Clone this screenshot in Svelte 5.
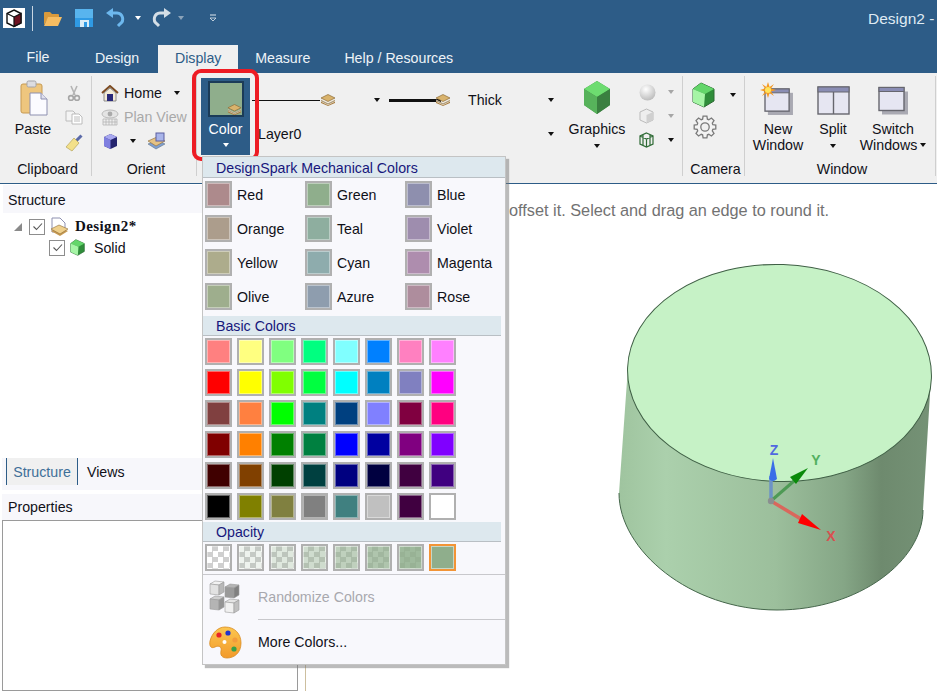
<script lang="ts">
  const tabs = ['Design', 'Display', 'Measure', 'Help / Resources'];

  const namedColors = [
    ['Red', '#ad8a8c'], ['Green', '#8fae8c'], ['Blue', '#8e8fae'],
    ['Orange', '#ac9d8c'], ['Teal', '#8eae9f'], ['Violet', '#9e8dae'],
    ['Yellow', '#adac8c'], ['Cyan', '#8eacad'], ['Magenta', '#ae8dae'],
    ['Olive', '#9eae8d'], ['Azure', '#8e9dae'], ['Rose', '#ae8d9d']
  ];

  const basicColors = [
    '#ff8080', '#ffff80', '#80ff80', '#00ff80', '#80ffff', '#0080ff', '#ff80c0', '#ff80ff',
    '#ff0000', '#ffff00', '#80ff00', '#00ff40', '#00ffff', '#0080c0', '#8080c0', '#ff00ff',
    '#804040', '#ff8040', '#00ff00', '#008080', '#004080', '#8080ff', '#800040', '#ff0080',
    '#800000', '#ff8000', '#008000', '#008040', '#0000ff', '#0000a0', '#800080', '#8000ff',
    '#400000', '#804000', '#004000', '#004040', '#000080', '#000040', '#400040', '#400080',
    '#000000', '#808000', '#808040', '#808080', '#408080', '#c0c0c0', '#400040', '#ffffff'
  ];

  const opacities = [0, 0.14, 0.28, 0.42, 0.57, 0.71, 0.85, 1];

  // the four little cubes of the Randomize Colors icon
  const randomCubes = [
    { x: 1, y: 1, top: '#f2f2f2', front: '#e2e2e2', side: '#b8b8b8' },
    { x: 16, y: 4, top: '#b4b4b4', front: '#9a9a9a', side: '#808080' },
    { x: 1, y: 16, top: '#cfcfcf', front: '#b4b4b4', side: '#949494' },
    { x: 16, y: 19, top: '#e4e4e4', front: '#f0f0f0', side: '#c0c0c0' }
  ];

  // eight toothed outline for the camera settings gear
  const gearPoints = (() => {
    const pts: string[] = [];
    for (let i = 0; i < 8; i++) {
      const a = (i * Math.PI) / 4;
      for (const [da, r] of [[-0.3, 8.2], [-0.17, 11], [0.17, 11], [0.3, 8.2]]) {
        pts.push(`${(12 + r * Math.cos(a + da)).toFixed(1)},${(12 + r * Math.sin(a + da)).toFixed(1)}`);
      }
    }
    return pts.join(' ');
  })();
</script>

{#snippet caret()}
  <span class="caret"></span>
{/snippet}

{#snippet layerIcon(w = 16)}
  <svg width={w} height={w * 0.75} viewBox="0 0 16 12">
    <path d="M1 7.500 8 11 15 7.500 15 9 8 12 1 9Z" fill="#a97f45" />
    <path d="M1 5.500 8 9 15 5.500 15 7.500 8 11 1 7.500Z" fill="#e9d6ac" />
    <path d="M1 4 8 .5 15 4 8 7.500Z" fill="#d9b36c" stroke="#8c6a35" stroke-width=".7" />
    <path d="M1 6.500 8 10 15 6.500" fill="none" stroke="#8d7d6c" stroke-width=".8" />
  </svg>
{/snippet}

{#snippet graphicsCube()}
  <svg width="28" height="35" viewBox="0 0 28 35">
    <path d="M14 1 27 9 27 25 14 34 1 25 1 9Z" fill="#3f8d44" />
    <path d="M14 1 27 9 14 17 1 9Z" fill="#6ddc70" />
    <path d="M1 9 14 17 14 34 1 25Z" fill="#57b25b" />
    <path d="M14 17 27 9 27 25 14 34Z" fill="#3a7f40" />
  </svg>
{/snippet}

{#snippet solidCube(w, h)}
  <svg width={w} height={h} viewBox="0 0 23 26">
    <path d="M9 1 22 7 22 19 12 25 1 20 1 7Z" fill="#2f8d3a" stroke="#2d6a34" />
    <path d="M1 7 9 1 22 7 13 12Z" fill="#63d66a" />
    <path d="M1 7 13 12 12 25 1 20Z" fill="#a6f5a6" />
  </svg>
{/snippet}

{#snippet windowIcon(w, h)}
  <svg width={w} height={h} viewBox="0 0 30 28">
    <rect x="4" y="5" width="26" height="23" fill="#a9a9b2" />
    <rect x="1" y="1" width="25" height="23" fill="#e6e6f2" stroke="#66666e" stroke-width="1.4" />
    <rect x="1" y="1" width="25" height="4" fill="#8a8db4" stroke="#66666e" stroke-width="1" />
  </svg>
{/snippet}

{#snippet checkMark()}
  <span class="check">
    <svg width="11" height="9" viewBox="0 0 11 9"><path d="M1.5 4.500 4.500 7.500 10 1.500" fill="none" stroke="#555" stroke-width="1.1" /></svg>
  </span>
{/snippet}

<div class="app">
  <header class="titlebar">
    <div class="qat">
      <span class="app-icon">
        <svg width="22" height="20" viewBox="0 0 22 20">
          <rect width="22" height="20" fill="#fff" />
          <path d="M11 2 18 5.500 18 15 11 18.500 4 15 4 5.500Z" fill="#fff" stroke="#111" stroke-width="1.4" />
          <path d="M11 9 18 5.500 18 15 11 18.500Z" fill="#6d1220" stroke="#111" stroke-width="1.2" />
          <path d="M4 5.500 11 9" stroke="#111" stroke-width="1.2" />
        </svg>
      </span>
      <span class="qat-sep"></span>
      <svg class="folder" width="20" height="17" viewBox="0 0 20 17">
        <path d="M1 15V3q0-1 1-1h5l2 2h6q1 0 1 1v2H6L1 15Z" fill="#d99a3c" />
        <path d="M1 16 5 7h14l-4 9Z" fill="#f6bd62" />
      </svg>
      <svg class="save" width="18" height="18" viewBox="0 0 18 18">
        <rect width="18" height="18" fill="#2f9ae4" />
        <rect x="0" y="0" width="18" height="9" fill="#58b4ee" />
        <rect x="5" y="11" width="9" height="7" fill="#d8ecf8" />
        <rect x="9" y="13" width="3" height="5" fill="#2f9ae4" />
      </svg>
      <svg class="undo" width="20" height="20" viewBox="0 0 20 20">
        <path d="M4 5H11a6 6 0 0 1 3 11l-2 2" fill="none" stroke="#6db8ee" stroke-width="3" />
        <path d="M7 0 7 10 0 5Z" fill="#6db8ee" />
      </svg>
      {@render caret()}
      <svg class="redo" width="22" height="20" viewBox="0 0 20 20">
        <path d="M16 5H9a6 6 0 0 0-3 11l2 2" fill="none" stroke="#d4dee6" stroke-width="3" />
        <path d="M13 0 13 10 20 5Z" fill="#d4dee6" />
      </svg>
      <span class="caret qat-dim"></span>
      <svg class="customize" width="8" height="8" viewBox="0 0 8 8">
        <path d="M1 1H7" stroke="#dfe7ee" stroke-width="1" />
        <path d="M1 4 4 7 7 4Z" fill="none" stroke="#dfe7ee" stroke-width=".8" />
      </svg>
      <span class="doc-title">Design2 -</span>
    </div>
    <nav class="tabs">
      <span class="tab file">File</span>
      {#each tabs as tab}
        <span class="tab" class:active={tab === 'Display'}>{tab}</span>
      {/each}
    </nav>
  </header>

  <div class="ribbon">
    <section class="group clipboard">
      <div class="group-body">
        <div class="big-btn paste">
          <svg width="28" height="36" viewBox="0 0 28 36">
            <rect x="1" y="4" width="21" height="29" rx="2" fill="#eec67e" stroke="#c79a52" />
            <rect x="7" y="1" width="9" height="6" rx="1.5" fill="#dcdce0" stroke="#a4a4a8" />
            <path d="M10 13H21L27 19V35H10Z" fill="#fbfbff" stroke="#8d90b0" />
            <path d="M21 13V19H27" fill="#dfe0ee" stroke="#8d90b0" />
          </svg>
          <span>Paste</span>
        </div>
        <div class="mini-col">
          <svg width="14" height="16" viewBox="0 0 14 16">
            <path d="M4 1 8 10M10 1 6 10" stroke="#b4b4b4" stroke-width="1.6" fill="none" />
            <circle cx="4" cy="13" r="2.400" fill="none" stroke="#a6a6a6" stroke-width="1.6" />
            <circle cx="10" cy="13" r="2.400" fill="none" stroke="#a6a6a6" stroke-width="1.6" />
          </svg>
          <svg width="18" height="15" viewBox="0 0 18 15">
            <path d="M1 1H8L10 3V11H1Z" fill="#f4f4f4" stroke="#bcbcbc" />
            <path d="M7 4H14L17 7V14H7ZM9 7H15M9 9H15M9 11H15" fill="#fff" stroke="#b4b4b4" stroke-width=".9" />
          </svg>
          <svg width="18" height="18" viewBox="0 0 18 18">
            <path d="M16.500 1.500 10 8" stroke="#5b6aa8" stroke-width="3" />
            <path d="M9 4 14 9 7 17 1 13Z" fill="#f3e08a" stroke="#b5a55a" stroke-width=".7" />
          </svg>
        </div>
      </div>
      <span class="group-label">Clipboard</span>
    </section>

    <section class="group orient">
      <div class="group-body rows">
        <div class="row">
          <svg width="18" height="17" viewBox="0 0 18 17">
            <path d="M1 8 9 1 17 8" fill="none" stroke="#7c4a20" stroke-width="2" />
            <path d="M3 8 9 3 15 8V16H3Z" fill="#f4ecd8" stroke="#777" stroke-width=".8" />
            <rect x="6" y="9" width="6" height="7" fill="#2a2a7a" />
          </svg>
          <span class="row-text">Home</span>
          <span class="row-caret home-caret">{@render caret()}</span>
        </div>
        <div class="row">
          <svg width="18" height="17" viewBox="0 0 18 17">
            <ellipse cx="9" cy="5" rx="8" ry="4" fill="#e4e4e4" stroke="#bbb" />
            <circle cx="9" cy="5" r="2.400" fill="#aaa" />
            <path d="M2 10H16V16H2ZM5 10V16M8 10V16M11 10V16M14 10V16M2 13H16" fill="#eee" stroke="#b4b4b4" stroke-width=".8" />
          </svg>
          <span class="row-text muted">Plan View</span>
        </div>
        <div class="row">
          <svg class="ori-cube" width="15" height="17" viewBox="0 0 15 17">
            <path d="M7.500 1 14 4 14 13 7.500 16 1 13 1 4Z" fill="#24246e" />
            <path d="M1 4 7.500 7 7.500 16 1 13Z" fill="#7f7fe0" />
            <path d="M1 4 7.500 1 14 4 7.500 7Z" fill="#a8a8f0" />
          </svg>
          <span class="ori-caret">{@render caret()}</span>
          <svg width="19" height="18" viewBox="0 0 19 18">
            <path d="M1 12 10 8 18 12 9 17Z" fill="#7f9fd0" stroke="#567" stroke-width=".5" />
            <path d="M1 9 10 5 18 9 9 14Z" fill="#e5c283" stroke="#8c6a35" stroke-width=".6" />
            <rect x="9" y="1" width="8" height="8" fill="#a8b4ea" stroke="#5b5ea0" />
          </svg>
        </div>
      </div>
      <span class="group-label">Orient</span>
    </section>

    <section class="group format">
      <div class="group-body format-body">
        <div class="color-btn">
          <span class="color-ring"></span>
          <span class="color-preview"><span class="layer-badge">{@render layerIcon(15)}</span></span>
          <span class="color-text">Color</span>
          <span class="caret white"></span>
        </div>
        <div class="style-rows">
          <div class="style-row top">
            <span class="line thin"></span>
            {@render layerIcon(16)}
            <span class="thin-caret">{@render caret()}</span>
            <span class="line thick"></span>
            <span class="thick-badge">{@render layerIcon(16)}</span>
            <span class="thick-label">Thick</span>
            <span class="end-caret">{@render caret()}</span>
          </div>
          <div class="style-row bottom">
            <span class="layer-name">Layer0</span>
            <span class="end-caret">{@render caret()}</span>
          </div>
        </div>
        <div class="big-btn graphics">
          {@render graphicsCube()}
          <span>Graphics</span>
          <span class="caret"></span>
        </div>
        <div class="shade-col">
          <div class="shade-row">
            <svg width="17" height="17" viewBox="0 0 17 17">
              <defs>
                <radialGradient id="sphere" cx="0.4" cy="0.3" r="0.8">
                  <stop offset="0" stop-color="#fff" /><stop offset="1" stop-color="#b4b4b4" />
                </radialGradient>
              </defs>
              <circle cx="8.500" cy="8.500" r="8" fill="url(#sphere)" />
            </svg>
            <span class="caret dim"></span>
          </div>
          <div class="shade-row">
            <svg width="15" height="16" viewBox="0 0 15 16">
              <path d="M7.500 1 14 4 14 12 7.500 15 1 12 1 4Z" fill="#eee" stroke="#bbb" />
              <path d="M7.500 7 14 4 14 12 7.500 15Z" fill="#d0d0d0" />
            </svg>
            <span class="caret dim"></span>
          </div>
          <div class="shade-row">
            <svg width="15" height="16" viewBox="0 0 15 16">
              <path d="M7.500 1 14 4 14 12 7.500 15 1 12 1 4ZM1 4 7.500 7 14 4M7.500 7V15M4 3V13M11 3V13" fill="none" stroke="#2f6b36" stroke-width="1.2" />
            </svg>
            <span class="caret"></span>
          </div>
        </div>
      </div>
    </section>

    <section class="group camera">
      <div class="group-body rows">
        <div class="row cam-row">
          {@render solidCube(23, 26)}
          {@render caret()}
        </div>
        <svg class="gear" width="24" height="24" viewBox="0 0 24 24">
          <polygon points={gearPoints} fill="#f3f3f3" stroke="#7a7a7a" stroke-width="1.3" />
          <circle cx="12" cy="12" r="4.200" fill="#f0f0f0" stroke="#7a7a7a" stroke-width="1.3" />
        </svg>
      </div>
      <span class="group-label">Camera</span>
    </section>

    <section class="group window">
      <div class="group-body win-body">
        <div class="big-btn win new">
          <span class="win-icon">
            {@render windowIcon(29, 27)}
            <svg class="spark" width="16" height="16" viewBox="0 0 16 16">
              <polygon points="8,0 9.6,5 14,2 11,6.4 16,8 11,9.6 14,14 9.6,11 8,16 6.4,11 2,14 5,9.6 0,8 5,6.4 2,2 6.4,5" fill="#f59a23" />
              <circle cx="8" cy="8" r="3" fill="#ffe45c" />
            </svg>
          </span>
          <span>New<br />Window</span>
        </div>
        <div class="big-btn win split">
          <span class="win-icon">
            <svg width="33" height="29" viewBox="0 0 33 29">
              <rect x="1" y="1" width="31" height="27" fill="#e6e6f2" stroke="#66666e" stroke-width="1.4" />
              <rect x="1" y="1" width="31" height="5" fill="#8a8db4" stroke="#66666e" />
              <path d="M16.500 6V28" stroke="#66666e" stroke-width="1.4" />
            </svg>
          </span>
          <span>Split</span>
          <span class="caret"></span>
        </div>
        <div class="big-btn win switch">
          <span class="win-icon">{@render windowIcon(30, 29)}</span>
          <span>Switch<br />Windows<span class="caret inline"></span></span>
        </div>
      </div>
      <span class="group-label">Window</span>
    </section>
  </div>

  <main class="workspace">
    <aside class="side">
      <div class="pane-head">Structure</div>
      <div class="tree">
        <div class="tree-row">
          <svg class="twisty" width="8" height="8" viewBox="0 0 8 8"><path d="M8 0V8H0Z" fill="#8a8a8a" /></svg>
          {@render checkMark()}
          <svg width="19" height="20" viewBox="0 0 19 20">
            <path d="M2 1H10L15 6V15H2Z" fill="#fff" stroke="#8d90b0" />
            <path d="M1 14 9 10 18 14 10 19Z" fill="#c79a52" />
            <path d="M1 12 9 8 18 12 10 17Z" fill="#efd08c" stroke="#8c6a35" stroke-width=".6" />
          </svg>
          <span class="design-name">Design2*</span>
        </div>
        <div class="tree-row solid">
          {@render checkMark()}
          {@render solidCube(15, 17)}
          <span class="solid-name">Solid</span>
        </div>
      </div>
      <div class="side-tabs">
        <span class="side-tab on">Structure</span>
        <span class="side-tab">Views</span>
      </div>
      <div class="pane-head props">Properties</div>
      <div class="props-box"></div>
    </aside>

    <div class="viewport">
      <p class="hint">offset it. Select and drag an edge to round it.</p>
      <svg class="model" width="632" height="507" viewBox="305 184 632 507">
        <defs>
          <linearGradient id="wall" x1="619" x2="931" y1="0" y2="0" gradientUnits="userSpaceOnUse">
            <stop offset="0" stop-color="#9fc49f" />
            <stop offset="0.15" stop-color="#abd0ac" />
            <stop offset="0.5" stop-color="#9cbf9c" />
            <stop offset="0.72" stop-color="#85a686" />
            <stop offset="0.84" stop-color="#6e8a6e" />
            <stop offset="1" stop-color="#759276" />
          </linearGradient>
        </defs>
        <path d="M628 367 619 493C619 550 690 610 777 610C860 610 923 560 923 510L931 377Z" fill="url(#wall)" />
        <path d="M619 493C619 550 690 610 777 610C860 610 923 560 923 510" fill="none" stroke="#45664b" />
        <ellipse cx="779.500" cy="373" rx="152" ry="108.500" transform="rotate(2 779.500 373)" fill="#c6f2c6" stroke="#3f5f45" />

        <path d="M771 501V476" stroke="#6d93c6" stroke-width="3.5" />
        <path d="M773 458 777 479 Q773 483 769 479Z" fill="#3a6ee8" />
        <path d="M771 501 794 481" stroke="#4e9a55" stroke-width="3" />
        <path d="M808 468 796 484 790 477Z" fill="#0a8a0a" />
        <path d="M771 501 801 519" stroke="#d9675c" stroke-width="3.5" />
        <path d="M821 530 798 523 802 514Z" fill="#f00" />
        <circle cx="771" cy="501" r="3.200" fill="#8a8f90" />
        <text x="774" y="455" class="axis" fill="#5068e0" text-anchor="middle">Z</text>
        <text x="816" y="465" class="axis" fill="#52b060" text-anchor="middle">Y</text>
        <text x="831" y="541" class="axis" fill="#d85050" text-anchor="middle">X</text>
      </svg>
    </div>
  </main>

  <div class="color-menu">
    <div class="menu-head first">DesignSpark Mechanical Colors</div>
    <div class="named-grid">
      {#each namedColors as [name, value]}
        <div class="named">
          <span class="swatch"><i style:background={value}></i></span>
          <span>{name}</span>
        </div>
      {/each}
    </div>
    <div class="menu-head">Basic Colors</div>
    <div class="basic-grid">
      {#each basicColors as value}
        <span class="swatch"><i style:background={value}></i></span>
      {/each}
    </div>
    <div class="menu-head opacity-head">Opacity</div>
    <div class="opacity-row">
      {#each opacities as alpha, i}
        <span class="swatch" class:selected={i === opacities.length - 1}>
          <i class="checker"><b style:opacity={alpha}></b></i>
        </span>
      {/each}
    </div>
    <div class="menu-item disabled">
      <svg width="33" height="34" viewBox="0 0 33 34">
        {#each randomCubes as c}
          <path d="M{c.x} {c.y + 3}l5-3 9 1-5 3Z" fill={c.top} stroke="#9a9a9a" stroke-width=".6" />
          <path d="M{c.x} {c.y + 3}l9 1v10l-9-1Z" fill={c.front} stroke="#9a9a9a" stroke-width=".6" />
          <path d="M{c.x + 9} {c.y + 4}l5-3v10l-5 3Z" fill={c.side} stroke="#9a9a9a" stroke-width=".6" />
        {/each}
      </svg>
      <span>Randomize Colors</span>
    </div>
    <div class="menu-rule"></div>
    <div class="menu-item">
      <svg width="33" height="33" viewBox="0 0 33 33">
        <defs>
          <linearGradient id="palette" x1="0" x2="0" y1="0" y2="1">
            <stop offset="0" stop-color="#fcc650" /><stop offset="1" stop-color="#f29a2a" />
          </linearGradient>
        </defs>
        <path d="M16 1C26 1 32 8 32 17 32 27 25 32 18 32 13 32 11 29 12 25 13 21 10 19 6 21 2 23 0 20 1 15 3 7 9 1 16 1Z" fill="url(#palette)" stroke="#d98a20" stroke-width=".8" />
        <circle cx="10" cy="9" r="2.600" fill="#e8242a" />
        <circle cx="19" cy="7" r="2.600" fill="#2233cc" />
        <circle cx="26" cy="14" r="2.600" fill="#f39c3c" />
        <circle cx="25" cy="23" r="2.600" fill="#38a048" />
        <circle cx="15.500" cy="16" r="2" fill="#fff" />
      </svg>
      <span>More Colors...</span>
    </div>
  </div>
</div>

<style>
  :global(body) {
    margin: 0;
    background: #fff;
  }

  .app {
    position: relative;
    display: flex;
    flex-direction: column;
    width: 937px;
    height: 691px;
    overflow: hidden;
    font-family: 'Liberation Sans', Arial, sans-serif;
    font-size: 14.2px;
    color: #101018;
  }

  /* title bar */
  .titlebar {
    height: 73px;
    background: #2d5c87;
    color: #fff;
    flex: none;
  }

  .qat {
    display: flex;
    align-items: center;
    height: 45px;
    padding: 0 0 9px 3px;
    box-sizing: border-box;
  }

  .app-icon {
    display: flex;
  }

  .qat-sep {
    width: 1px;
    height: 25px;
    margin: 0 10px 0 7px;
    background: #c9d6e2;
  }

  .save {
    margin-left: 12px;
  }

  .undo {
    margin: 0 9px 0 13px;
  }

  .qat .caret {
    border-top-color: #fff;
  }

  .redo {
    margin-left: 9px;
  }

  .qat .qat-dim {
    margin-left: 6px;
    border-top-color: #8ba3b9;
  }

  .customize {
    margin-left: 25px;
  }

  .doc-title {
    margin-left: auto;
    padding-top: 2px;
    width: 69px;
    font-size: 15.5px;
    color: #dfeaf3;
    white-space: nowrap;
  }

  .tabs {
    display: flex;
    height: 28px;
  }

  .tab {
    padding: 0 17px;
    line-height: 27px;
    color: #eef3f7;
    white-space: nowrap;
  }

  .tab.file {
    width: 76px;
    padding: 0;
    margin-right: 2px;
    text-align: center;
    line-height: 25px;
    box-sizing: border-box;
  }

  .tab.active {
    width: 80px;
    margin: 0 0 0 2px;
    padding: 0;
    text-align: center;
    background: #f0f0f0;
    color: #2d5c87;
  }

  /* ribbon */
  .ribbon {
    display: flex;
    height: 111px;
    flex: none;
    box-sizing: border-box;
    background: #f0f0f0;
    border-bottom: 1px solid #2d5c87;
  }

  .group {
    display: flex;
    flex-direction: column;
    flex: none;
    height: 100px;
    margin-top: 3px;
    box-sizing: border-box;
    border-right: 1px solid #cfcfcf;
  }

  .group-body {
    display: flex;
    flex: none;
    height: 86px;
  }

  .group-label {
    height: 14px;
    padding-left: 4px;
    text-align: center;
    line-height: 14px;
  }

  .clipboard {
    width: 92px;
  }

  .orient {
    width: 105px;
  }

  .format {
    width: 486px;
  }

  .camera {
    width: 62px;
  }

  .window {
    width: 191px;
  }

  .big-btn {
    display: flex;
    flex-direction: column;
    align-items: center;
    text-align: center;
    line-height: 16px;
  }

  .big-btn .caret {
    margin-top: 6px;
  }

  .paste {
    width: 66px;
    padding-top: 4px;
    gap: 5px;
  }

  .paste svg {
    margin-left: 1px;
  }

  .mini-col {
    display: flex;
    flex-direction: column;
    align-items: center;
    width: 20px;
    margin-left: -2px;
    padding-top: 9px;
    gap: 9px;
  }

  .rows {
    flex-direction: column;
    padding: 5px 0 0 9px;
    box-sizing: border-box;
  }

  .row {
    display: flex;
    align-items: center;
    flex: none;
    height: 24px;
  }

  .row-text {
    margin-left: 5px;
    white-space: nowrap;
  }

  .muted {
    color: #a9a9a9;
  }

  .home-caret {
    display: flex;
    margin-left: 12px;
  }

  .ori-cube {
    margin-left: 2px;
  }

  .ori-caret {
    display: flex;
    margin: 0 11px 0 12px;
  }

  .caret {
    display: inline-block;
    width: 0;
    height: 0;
    flex: none;
    border-left: 3.5px solid transparent;
    border-right: 3.5px solid transparent;
    border-top: 4px solid #111;
  }

  .caret.dim {
    border-top-color: #a6a6a6;
  }

  .caret.white {
    border-top-color: #fff;
  }

  .caret.inline {
    margin: 0 0 3px 3px;
    vertical-align: middle;
  }

  .format-body {
    padding: 2px 0 0 4px;
    box-sizing: border-box;
  }

  .color-btn {
    position: relative;
    display: flex;
    flex-direction: column;
    align-items: center;
    flex: none;
    width: 49px;
    height: 77px;
    background: #2d5c87;
    color: #fff;
  }

  .color-ring {
    position: absolute;
    inset: -9px -9px -6px -9px;
    border: 4px solid #ed1c24;
    border-radius: 9px;
    pointer-events: none;
  }

  .color-preview {
    position: relative;
    width: 32px;
    height: 32px;
    margin-top: 3px;
    background: #8fae8c;
    border: 2px solid #1b3b58;
  }

  .layer-badge {
    position: absolute;
    right: 0;
    bottom: 0;
    display: flex;
  }

  .color-text {
    margin-top: 4px;
    line-height: 16px;
  }

  .color-btn .caret {
    margin-top: 6px;
  }

  .style-rows {
    display: flex;
    flex-direction: column;
    flex: none;
    width: 306px;
    margin-left: 2px;
  }

  .style-row {
    display: flex;
    align-items: center;
    height: 24px;
  }

  .style-row.top,
  .style-row.bottom {
    margin-top: 10px;
  }

  .line {
    flex: none;
    background: #111;
  }

  .line.thin {
    width: 68px;
    height: 1px;
  }

  .thin-caret {
    display: flex;
    margin: 0 9px 0 38px;
  }

  .line.thick {
    width: 52px;
    height: 3px;
  }

  .thick-badge {
    display: flex;
    margin-left: -6px;
  }

  .thick-label {
    margin-left: 17px;
  }

  .end-caret {
    display: flex;
    margin-left: auto;
    margin-right: 4px;
  }

  .layer-name {
    margin-left: 6px;
  }

  .graphics {
    flex: none;
    width: 66px;
    margin-left: 6px;
    padding-top: 2px;
    gap: 6px;
  }

  .graphics .caret {
    margin-top: 1px;
  }

  .shade-col {
    display: flex;
    flex-direction: column;
    align-items: stretch;
    gap: 8px;
    margin-left: 9px;
    padding-top: 6px;
  }

  .shade-row {
    display: flex;
    align-items: center;
    height: 16px;
    width: 35px;
    justify-content: space-between;
  }

  .cam-row {
    gap: 15px;
    height: 28px;
  }

  .gear {
    margin: 6px 0 0 1px;
  }

  .win-body {
    padding: 6px 0 0 0;
    box-sizing: border-box;
  }

  .win {
    flex: none;
  }

  .win-icon {
    position: relative;
    display: flex;
    align-items: flex-end;
    height: 33px;
    margin-bottom: 6px;
  }

  .spark {
    position: absolute;
    left: -4px;
    top: 0;
  }

  .new {
    width: 66px;
  }

  .split {
    width: 44px;
  }

  .split .caret {
    margin-top: 7px;
  }

  .switch {
    width: 76px;
  }

  /* workspace */
  .workspace {
    display: flex;
    flex: 1;
    min-height: 0;
    background: #fff;
  }

  .side {
    display: flex;
    flex-direction: column;
    flex: none;
    width: 298px;
    padding-top: 1px;
    box-sizing: border-box;
  }

  .pane-head {
    height: 28px;
    margin-left: 3px;
    padding-left: 5px;
    line-height: 30px;
    background: #f7f7fb;
  }

  .tree {
    height: 245px;
    padding-top: 3px;
    box-sizing: border-box;
  }

  .tree-row {
    display: flex;
    align-items: center;
    height: 21px;
    padding-left: 14px;
  }

  .tree-row.solid {
    padding-left: 49px;
  }

  .twisty {
    margin-right: 7px;
  }

  .check {
    display: flex;
    align-items: center;
    justify-content: center;
    width: 14px;
    height: 14px;
    margin-right: 5px;
    background: #fff;
    border: 1px solid #8d8d8d;
  }

  .design-name {
    margin-left: 6px;
    font-family: 'Liberation Serif', serif;
    font-weight: 700;
    font-size: 15px;
    letter-spacing: 0.4px;
  }

  .solid-name {
    margin-left: 9px;
  }

  .side-tabs {
    display: flex;
    height: 32px;
    margin-left: 2px;
    padding-left: 4px;
    background: #f7f7fb;
  }

  .side-tab {
    height: 27px;
    padding: 0 8px;
    line-height: 28px;
  }

  .side-tab.on {
    width: 72px;
    padding: 0;
    text-align: center;
    box-sizing: border-box;
    background: #f0f0f0;
    color: #3e6f98;
    border-left: 1px solid #2d5c87;
    border-right: 1px solid #2d5c87;
  }

  .side-tabs .side-tab:last-child {
    margin-left: 1px;
  }

  .props {
    height: 26px;
    margin: 4px 0 0 2px;
    padding-left: 6px;
    line-height: 27px;
  }

  .props-box {
    flex: 1;
    margin-left: 2px;
    background: #fff;
    border: 1px solid #9a9a9a;
  }

  .viewport {
    position: relative;
    flex: 1;
    margin-left: 7px;
    overflow: hidden;
    background: #fff;
    border-left: 1px solid #cdbf9f;
  }

  .hint {
    position: relative;
    z-index: 1;
    margin: 17px 0 0 203px;
    font-size: 16.3px;
    color: #727272;
    white-space: nowrap;
  }

  .model {
    position: absolute;
    left: -1px;
    top: 0;
  }

  .axis {
    font: 700 14px 'Liberation Sans', sans-serif;
  }

  /* colour drop-down, lies over the ribbon and the panels */
  .color-menu {
    position: absolute;
    left: 202px;
    top: 156px;
    width: 304px;
    height: 509px;
    box-sizing: border-box;
    background: #f8f8fc;
    border: 1px solid #c4c4c4;
    box-shadow: 3px 3px 1px rgba(120, 120, 120, 0.5);
  }

  .menu-head {
    width: 298px;
    height: 20px;
    padding-left: 13px;
    box-sizing: border-box;
    background: #dde8ee;
    border-bottom: 1px solid #b9bfc4;
    color: #17177c;
    line-height: 21px;
  }

  .menu-head.first {
    width: auto;
    height: 21px;
    line-height: 22px;
  }

  .named-grid {
    display: grid;
    grid-template-columns: repeat(3, 100px);
    grid-auto-rows: 27px;
    row-gap: 7px;
    padding: 3px 0 6px 2px;
  }

  .named {
    display: flex;
    align-items: center;
    gap: 5px;
  }

  .swatch {
    display: block;
    width: 27px;
    height: 27px;
    box-sizing: border-box;
    border: 2px solid #b0b0b0;
  }

  .swatch i {
    display: block;
    position: relative;
    width: 100%;
    height: 100%;
    box-shadow: inset 0 0 0 1px rgba(255, 255, 255, 0.4);
  }

  .basic-grid {
    display: grid;
    grid-template-columns: repeat(8, 27px);
    grid-auto-rows: 27px;
    column-gap: 5px;
    row-gap: 4px;
    padding: 2px 0 1px 2px;
  }

  .opacity-head {
    margin-top: 1px;
  }

  .opacity-row {
    display: flex;
    gap: 5px;
    padding: 2px 0 3px 2px;
    border-bottom: 1px solid #c8c8cc;
  }

  .checker {
    background: repeating-conic-gradient(#cfcfcf 0 25%, #fff 0 50%) 0 0 / 11px 11px;
  }

  .checker b {
    display: block;
    width: 100%;
    height: 100%;
    background: #8fae8c;
    box-shadow: inset 0 0 0 1px rgba(255, 255, 255, 0.5);
  }

  .swatch.selected {
    border-color: #f29436;
  }

  .menu-item {
    display: flex;
    align-items: center;
    height: 44px;
    padding-left: 6px;
  }

  .menu-item svg {
    width: 33px;
    flex: none;
  }

  .menu-item span {
    margin-left: 16px;
  }

  .menu-item.disabled {
    color: #a8a8ae;
  }

  .menu-rule {
    height: 1px;
    margin-left: 55px;
    background: #c8c8cc;
  }
</style>
